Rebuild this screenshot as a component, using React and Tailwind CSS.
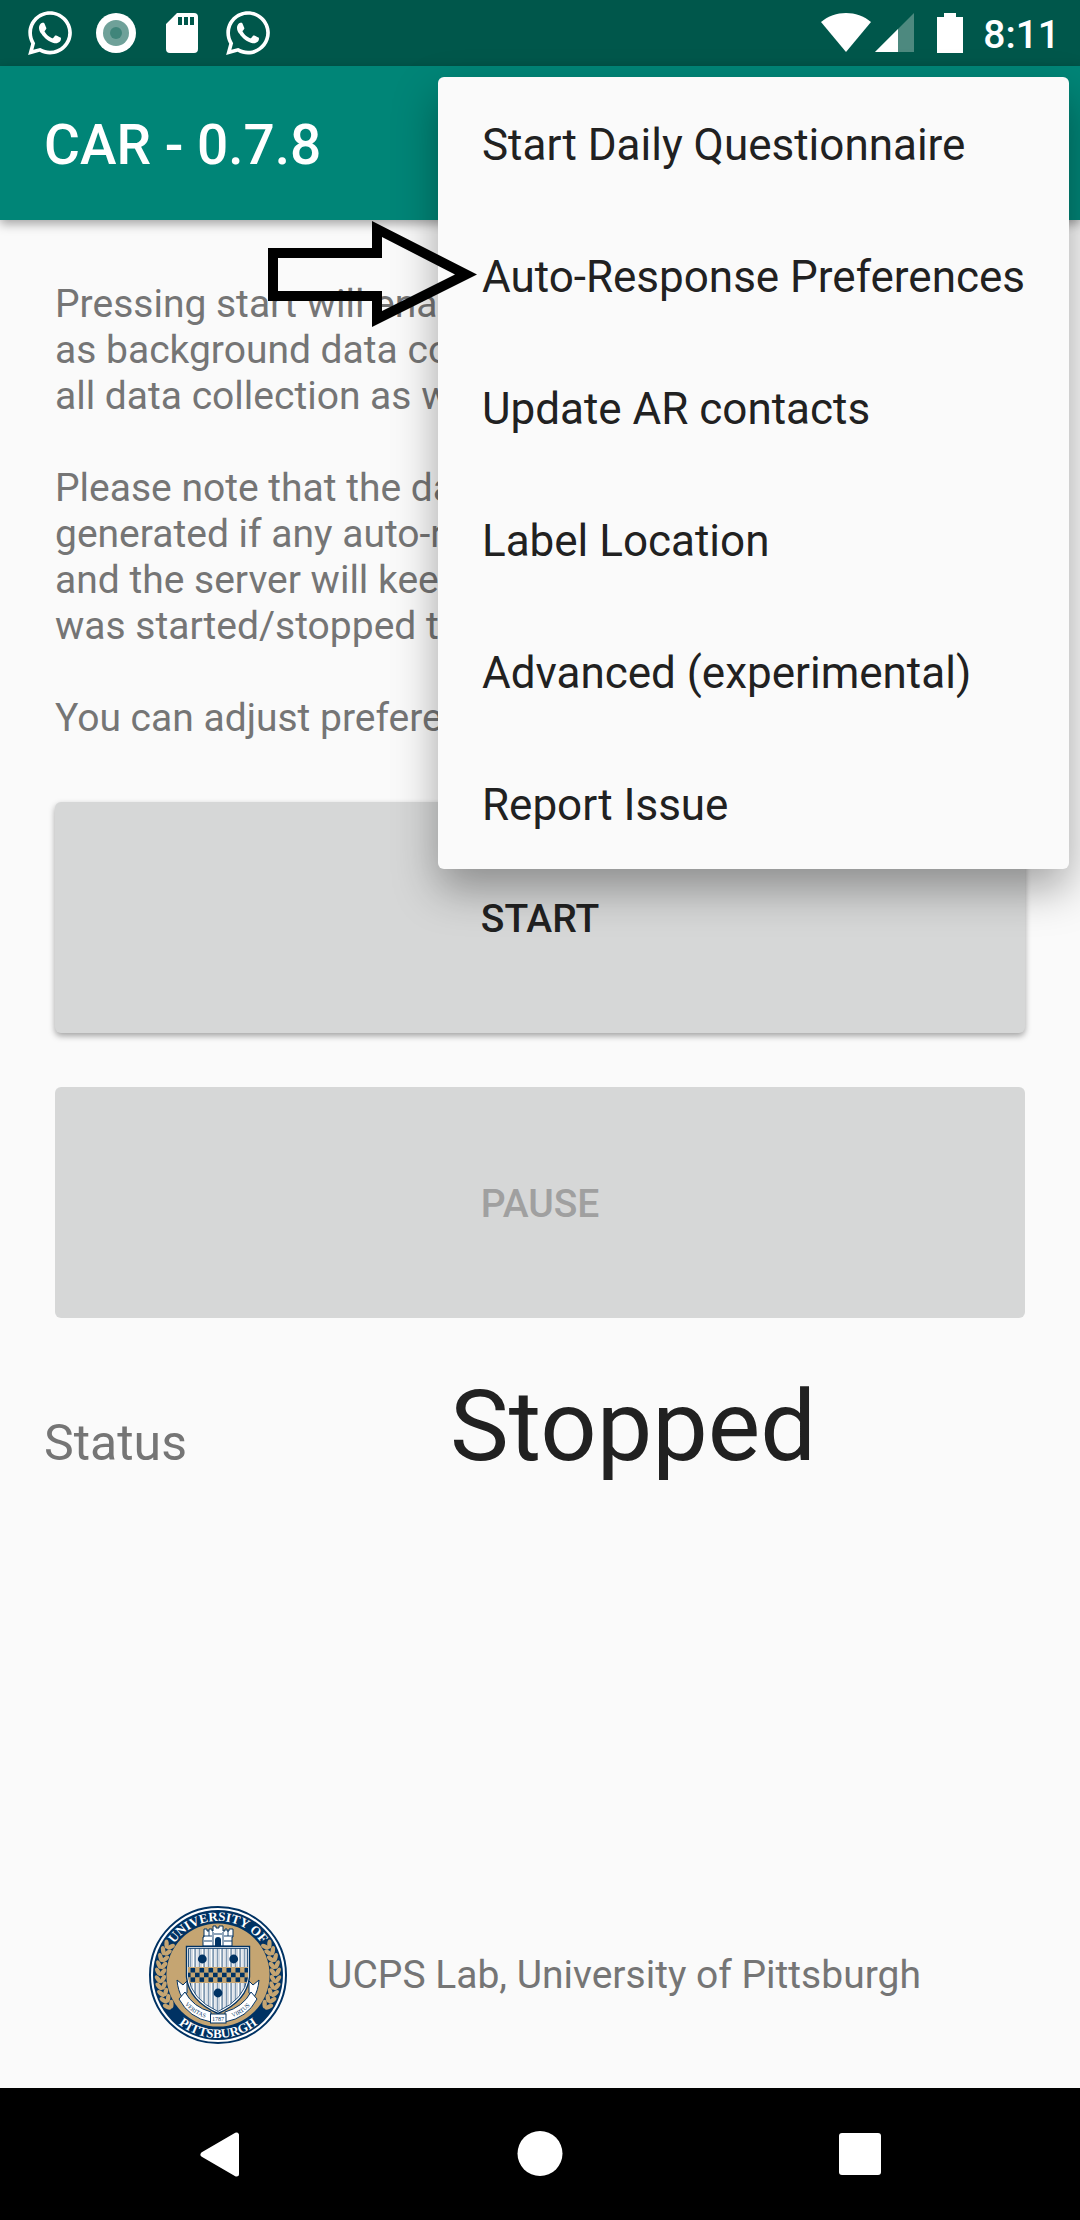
import React from 'react';
import { FaWhatsapp } from 'react-icons/fa';

const menuItems = [
    'Start Daily Questionnaire',
    'Auto-Response Preferences',
    'Update AR contacts',
    'Label Location',
    'Advanced (experimental)',
    'Report Issue',
];

const paragraphs = [
    ['Pressing start will enable auto-response as well', 'as background data collection. Stop will end', 'all data collection as well as auto-response.'],
    ['Please note that the daily questionnaire is', 'generated if any auto-response was sent,', 'and the server will keep track of when it', 'was started/stopped that day.'],
    ['You can adjust preferences in the menu.'],
];

const StatusBar = () => (
    <div className="flex h-[66px] items-center justify-between bg-[#00574b] pr-5 pl-[25px] text-white">
        <div className="flex items-center gap-4">
            <FaWhatsapp size={50} />
            <svg width="50" height="50" viewBox="0 0 50 50">
                <circle cx="25" cy="25" r="20" fill="#fff" />
                <circle cx="25" cy="25" r="13" fill="#6fa199" />
                <circle cx="25" cy="25" r="6" fill="#40857a" />
            </svg>
            <svg width="50" height="50" viewBox="0 0 50 50">
                <path fill="#fff" fillRule="evenodd" d="M20 5h17a4 4 0 0 1 4 4v32a4 4 0 0 1-4 4H13a4 4 0 0 1-4-4V16zM21 9v8h4V9zM27 9v8h4V9zM33 9v8h4V9z" />
            </svg>
            <FaWhatsapp size={50} />
        </div>
        <div className="flex items-center">
            <svg width="50" height="40" viewBox="0 0 50 40">
                <path fill="#fff" d="M0 9C14-3 36-3 50 9L25 39z" />
            </svg>
            <svg className="ml-1" width="40" height="40" viewBox="0 0 40 40">
                <path fill="#4d897f" d="M39 0v39H0z" />
                <path fill="#fff" d="M23 16v23H0z" />
            </svg>
            <svg className="ml-[22px]" width="26" height="40" viewBox="0 0 26 40">
                <path fill="#fff" d="M7 0h12v4h7v36H0V4h7z" />
            </svg>
            <span className="ml-5 pt-1 text-[39px] leading-none font-medium">8:11</span>
        </div>
    </div>
);

// leaves of one laurel branch, placed along the navy ring
const leaves = [-32, -25, -18, -11, -4, 3, 10, 17, 24, 31];

const Branch = () => (
    <g fill="#c5a572">
        {leaves.map((deg) => (
            <g key={deg} transform={`rotate(${deg} 69 69)`}>
                <ellipse cx="9" cy="69" rx="2.2" ry="4.6" transform="rotate(-32 9 69)" />
                <ellipse cx="14" cy="69" rx="2.2" ry="4.4" transform="rotate(32 14 69)" />
            </g>
        ))}
    </g>
);

const Seal = () => (
    <svg width="138" height="138" viewBox="0 0 138 138" role="img" aria-label="University of Pittsburgh seal">
        <defs>
            <path id="arcTop" d="M15 69a54 54 0 0 1 108 0" />
            <path id="arcBottom" d="M6 69a63 63 0 0 0 126 0" />
            <path id="ribbonLeft" d="M33 94Q42 109 61 113" />
            <path id="ribbonRight" d="M77 113Q96 109 105 94" />
            <clipPath id="shield">
                <path d="M39 42h60v28Q97 93 69 106Q41 93 39 70z" />
            </clipPath>
            <pattern id="stripes" width="4.5" height="6" patternUnits="userSpaceOnUse">
                <path d="M1 0v6" stroke="#003263" strokeWidth="0.9" />
                <path d="M3 0v6" stroke="#a9b7c8" strokeWidth="0.7" />
            </pattern>
        </defs>
        <circle cx="69" cy="69" r="68" fill="#fff" stroke="#003263" strokeWidth="2" />
        <circle cx="69" cy="69" r="65" fill="#003263" />
        <circle cx="69" cy="69" r="51.6" fill="#c5a572" />
        <Branch />
        <g transform="matrix(-1 0 0 1 138 0)"><Branch /></g>
        <g fill="#fff" fontFamily="'Liberation Serif', serif" fontWeight="700" fontSize="13" textAnchor="middle">
            <text><textPath href="#arcTop" startOffset="50%">UNIVERSITY OF</textPath></text>
            <text><textPath href="#arcBottom" startOffset="50%">PITTSBURGH</textPath></text>
        </g>

        {/* castle */}
        <path fill="#fff" stroke="#003263" strokeWidth="1" d="M54 40V31h1V23h3v2h2v-2h3v2h1v-5h3v2h3v-2h4v5h2v-2h2v2h2v-2h4v8h-1v9z" />
        <path fill="none" stroke="#003263" strokeWidth="0.9" d="M54 30h9M75 30h9M64 26v14M74 26v14M55 35h8M75 35h8M65 28h8M60 25v5M79 25v5" />
        <path fill="#003263" d="M66 40v-6a3 3 0 0 1 6 0v6z" />

        {/* ribbon */}
        <g fill="#fff" stroke="#003263" strokeWidth="1">
            <path d="M28 74l6 5 4-4v12l-5 4q-4-6-5-17zM110 74l-6 5-4-4v12l5 4q4-6 5-17z" />
            <path d="M36 86Q44 101 62 106V116Q40 112 30 93zM102 86Q94 101 76 106V116Q98 112 108 93z" />
        </g>

        {/* shield */}
        <path fill="#fff" stroke="#003263" strokeWidth="1.4" d="M37.5 40.5h63V71Q98 95 69 107.5Q40 95 37.5 71z" />
        <path fill="url(#stripes)" stroke="#003263" strokeWidth="0.8" d="M39.5 42.5h59V71Q96 93 69 105.5Q42 93 39.5 71z" />
        <g clipPath="url(#shield)">
            <rect x="39" y="61" width="60" height="16" fill="#c5a572" />
            {[0, 1, 2].map((row) => [0, 1, 2, 3, 4, 5, 6].map((col) => (
                <rect key={`${row}-${col}`} x={37 + col * 9 + (row % 2 ? 0 : 4.5)} y={62 + row * 4.7} width="4.6" height="4.5" fill="#003263" />
            )))}
        </g>
        <g fill="#003263">
            <circle cx="53.3" cy="53" r="4.4" />
            <circle cx="84.7" cy="53" r="4.4" />
            <circle cx="69" cy="87" r="4.4" />
        </g>
        <rect x="61.5" y="108" width="15.5" height="9" fill="#fff" stroke="#003263" strokeWidth="1" />
        <g fill="#003263" fontFamily="'Liberation Serif', serif" fontSize="6" textAnchor="middle">
            <text x="69" y="115">1787</text>
            <text><textPath href="#ribbonLeft" startOffset="50%">VERITAS</textPath></text>
            <text><textPath href="#ribbonRight" startOffset="50%">VIRTUS</textPath></text>
        </g>
    </svg>
);

const OverflowMenu = () => (
    <ul className="absolute top-[77px] right-[11px] rounded-md bg-[#fafafa] shadow-[0_20px_44px_rgba(0,0,0,0.34)]">
        {menuItems.map((item) => (
            <li key={item}>
                <button className="flex h-[132px] w-full items-center px-11 pt-1 text-[44px] leading-none whitespace-nowrap text-[#212121]">{item}</button>
            </li>
        ))}
    </ul>
);

const NavBar = () => (
    <nav className="flex h-[132px] items-center justify-center bg-black">
        <div className="grid w-8/9 grid-cols-3 justify-items-center">
            <button aria-label="Back">
                <svg width="46" height="46" viewBox="0 0 46 46">
                    <path fill="#fff" stroke="#fff" strokeWidth="5" strokeLinejoin="round" d="M6 23.5L39.5 4V43z" />
                </svg>
            </button>
            <button aria-label="Home">
                <svg width="46" height="46" viewBox="0 0 46 46"><circle cx="23" cy="22.5" r="22.5" fill="#fff" /></svg>
            </button>
            <button aria-label="Recent apps">
                <svg width="46" height="46" viewBox="0 0 46 46"><rect x="2" y="2" width="42" height="42" rx="3" fill="#fff" /></svg>
            </button>
        </div>
    </nav>
);

const App = () => (
    <div className="relative flex min-h-screen flex-col bg-[#fafafa] font-['Roboto',sans-serif]">
        <StatusBar />
        <header className="flex h-[154px] items-center bg-[#008577] px-11 pt-1 shadow-[0_4px_10px_rgba(0,0,0,0.35)]">
            <h1 className="text-[55px] leading-none font-medium text-white">CAR - 0.7.8</h1>
        </header>

        <main className="flex flex-1 flex-col px-11 pt-[61px]">
            <div className="flex flex-col gap-[46px] px-[11px] text-[39px] leading-[46px] whitespace-nowrap text-[#757575]">
                {paragraphs.map((lines) => (
                    <p key={lines[0]}>
                        {lines.map((line) => <span key={line} className="block">{line}</span>)}
                    </p>
                ))}
            </div>

            <div className="mt-[61px] flex flex-col gap-[54px] px-[11px]">
                <button className="h-[231px] rounded-md bg-[#d6d7d7] pt-1 text-[39px] font-medium text-[#212121] shadow-[0_3px_6px_rgba(0,0,0,0.35)]">START</button>
                <button disabled className="h-[231px] rounded-md bg-[#d6d7d7] pt-1 text-[39px] font-medium text-[#a0a0a0]">PAUSE</button>
            </div>

            <div className="mt-[50px] flex items-baseline">
                <span className="w-[406px] text-[50px] text-[#757575]">Status</span>
                <span className="text-[99px] leading-[116px] text-[#212121]">Stopped</span>
            </div>

            <footer className="mt-auto flex items-center justify-center gap-10 pr-2.5 pb-11">
                <Seal />
                <span className="text-[39px] text-[#757575]">UCPS Lab, University of Pittsburgh</span>
            </footer>
        </main>

        <NavBar />
        <OverflowMenu />

        {/* pointer to the preferences entry */}
        <svg className="absolute top-[220px] right-[602px]" width="210" height="108" viewBox="0 0 210 108" aria-hidden="true">
            <path fillRule="evenodd" d="M0 28H104V1L209 54.5L104 107V81H0zM10 38V71H114V91L187 54.5L114 17V38z" />
        </svg>
    </div>
);

export default App;
